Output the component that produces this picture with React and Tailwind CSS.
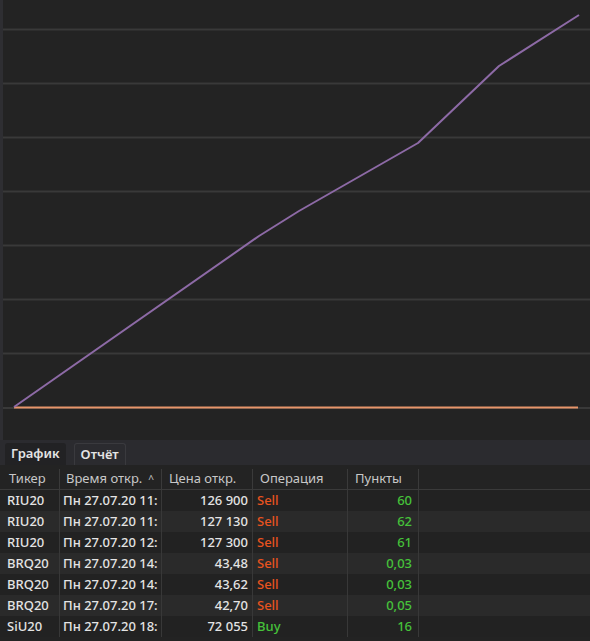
import React from 'react';

const rows = [
  ['RIU20', 'Пн 27.07.20 11:', '126 900', 'Sell', '60'],
  ['RIU20', 'Пн 27.07.20 11:', '127 130', 'Sell', '62'],
  ['RIU20', 'Пн 27.07.20 12:', '127 300', 'Sell', '61'],
  ['BRQ20', 'Пн 27.07.20 14:', '43,48', 'Sell', '0,03'],
  ['BRQ20', 'Пн 27.07.20 14:', '43,62', 'Sell', '0,03'],
  ['BRQ20', 'Пн 27.07.20 17:', '42,70', 'Sell', '0,05'],
  ['SiU20', 'Пн 27.07.20 18:', '72 055', 'Buy', '16'],
];

const gridY = [29, 83, 137, 191, 245, 299, 353];

const Chart = () => (
  <div className="relative h-[440px] bg-[#232323] border-l-[3px] border-[#2e2e32]">
    <svg className="absolute inset-0" width="587" height="440">
      {gridY.map((y) => (
        <line key={y} x1="0" x2="587" y1={y + 0.5} y2={y + 0.5} stroke="#393939" strokeWidth="2" />
      ))}
      <line x1="0" x2="587" y1="408" y2="408" stroke="#393939" strokeWidth="2" />
      <line x1="11" x2="575" y1="407.5" y2="407.5" stroke="#e8956a" strokeWidth="2" />
      <polyline
        points="11,407 256,236 296,211 415,143 496,66 576,15"
        fill="none"
        stroke="#8d6aa6"
        strokeWidth="2"
        strokeLinejoin="round"
      />
    </svg>
  </div>
);

export default function App() {
  return (
    <div className="w-[590px] h-[641px] bg-[#232323] overflow-hidden text-[13px] text-[#e4e4e4]" style={{ fontFamily: '"Noto Sans", sans-serif' }}>
      <Chart />
      <div className="flex items-end h-[25px] bg-[#2b2b2f] pl-[5px] gap-[8px]">
        <div className="h-[22px] px-[6px] bg-[#222224] font-semibold flex items-center rounded-t-[3px]">График</div>
        <div className="h-[22px] px-[6px] border border-b-0 border-[#3a3a3e] font-semibold flex items-center rounded-t-[3px]">Отчёт</div>
      </div>
      <div className="h-[4px] bg-[#232323]" />
      <div className="flex h-[21px] items-center text-[#c8c8c8] border-b border-[#3a3a3a]">
        <div className="w-[60px] px-[9px] border-r border-[#3a3a3a] h-full flex items-center">Тикер</div>
        <div className="w-[102px] px-[6px] border-r border-[#3a3a3a] h-full flex items-center gap-[6px]">Время откр. <span className="text-[10px]">^</span></div>
        <div className="w-[91px] px-[7px] border-r border-[#3a3a3a] h-full flex items-center">Цена откр.</div>
        <div className="w-[95px] px-[7px] border-r border-[#3a3a3a] h-full flex items-center">Операция</div>
        <div className="w-[71px] px-[7px] border-r border-[#3a3a3a] h-full flex items-center">Пункты</div>
      </div>
      {rows.map((r, i) => (
        <div key={i} className={`flex h-[21px] items-center font-medium ${i % 2 ? 'bg-[#2a2a2a]' : 'bg-[#222222]'}`}>
          <div className="w-[60px] px-[7px] border-r border-[#383838] h-full flex items-center">{r[0]}</div>
          <div className="w-[102px] px-[3px] border-r border-[#383838] h-full flex items-center whitespace-nowrap overflow-hidden">{r[1]}</div>
          <div className="w-[91px] px-[4px] border-r border-[#383838] h-full flex items-center justify-end">{r[2]}</div>
          <div className={`w-[95px] px-[4px] border-r border-[#383838] h-full flex items-center ${r[3] === 'Sell' ? 'text-[#e8531f]' : 'text-[#46c23a]'}`}>{r[3]}</div>
          <div className="w-[71px] px-[6px] border-r border-[#383838] h-full flex items-center justify-end text-[#46c23a]">{r[4]}</div>
        </div>
      ))}
    </div>
  );
}
